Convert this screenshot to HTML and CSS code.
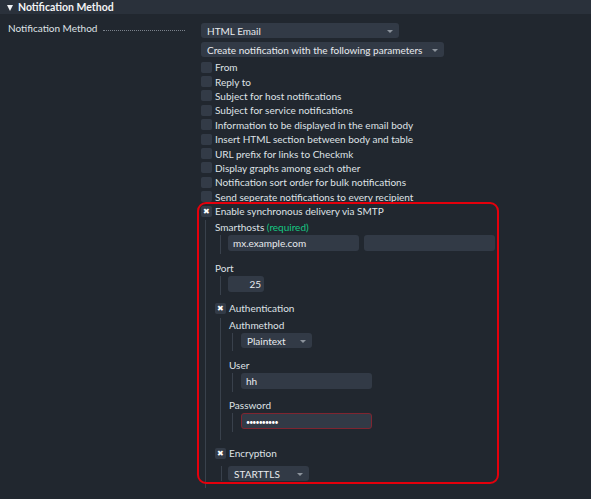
FILE: index.html
```html
<!DOCTYPE html>
<html>
<head>
<meta charset="utf-8">
<link rel="stylesheet" href="styles.css">
</head>
<body>
<div class="section-head"><span class="tri"></span><span class="head-title">Notification Method</span></div>
<div class="form-row">
  <div class="label"><span>Notification Method</span><span class="leader"></span></div>
  <div class="value">
    <div class="select w1"><span>HTML Email</span><span class="arrow"></span></div>
    <div class="select w2"><span>Create notification with the following parameters</span><span class="arrow"></span></div>
    <div class="checklist">
      <div class="cb-row"><span class="cb"></span><span>From</span></div>
      <div class="cb-row"><span class="cb"></span><span>Reply to</span></div>
      <div class="cb-row"><span class="cb"></span><span>Subject for host notifications</span></div>
      <div class="cb-row"><span class="cb"></span><span>Subject for service notifications</span></div>
      <div class="cb-row"><span class="cb"></span><span>Information to be displayed in the email body</span></div>
      <div class="cb-row"><span class="cb"></span><span>Insert HTML section between body and table</span></div>
      <div class="cb-row"><span class="cb"></span><span>URL prefix for links to Checkmk</span></div>
      <div class="cb-row"><span class="cb"></span><span>Display graphs among each other</span></div>
      <div class="cb-row"><span class="cb"></span><span>Notification sort order for bulk notifications</span></div>
      <div class="cb-row"><span class="cb"></span><span>Send seperate notifications to every recipient</span></div>
      <div class="cb-row"><span class="cb on">&#x2716;</span><span>Enable synchronous delivery via SMTP</span></div>
    </div>
    <div class="sub smtp">
      <div class="flabel first">Smarthosts <span class="req">(required)</span></div>
      <div class="indent hosts">
        <div class="input w-host">mx.example.com</div>
        <div class="input w-host"></div>
      </div>
      <div class="flabel port">Port</div>
      <div class="indent">
        <div class="input w-port">25</div>
      </div>
      <div class="cb-row auth"><span class="cb on">&#x2716;</span><span>Authentication</span></div>
      <div class="sub auth-sub">
        <div class="flabel first">Authmethod</div>
        <div class="indent deep">
          <div class="select w-plain"><span>Plaintext</span><span class="arrow"></span></div>
        </div>
        <div class="flabel user">User</div>
        <div class="indent deep">
          <div class="input w-user">hh</div>
        </div>
        <div class="flabel">Password</div>
        <div class="indent deep">
          <div class="input w-user invalid"><span class="dots">&#x2022;&#x2022;&#x2022;&#x2022;&#x2022;&#x2022;&#x2022;&#x2022;&#x2022;&#x2022;</span></div>
        </div>
      </div>
      <div class="cb-row enc"><span class="cb on">&#x2716;</span><span>Encryption</span></div>
      <div class="indent enc-ind">
        <div class="select w-tls"><span>STARTTLS</span><span class="arrow"></span></div>
      </div>
    </div>
  </div>
</div>
<div class="highlight"></div>
</body>
</html>
```
FILE: styles.css
```css
html, body {
  margin: 0;
  padding: 0;
}
body {
  background: #21272f;
  color: #dfe2e6;
  font-family: Lato, "Noto Sans", sans-serif;
  font-size: 10px;
  position: relative;
  height: 499px;
  overflow: hidden;
}
.section-head {
  height: 14px;
  background: #2a313b;
  display: flex;
  align-items: center;
  padding-left: 7px;
}
.tri {
  width: 0;
  height: 0;
  border-left: 3.5px solid transparent;
  border-right: 3.5px solid transparent;
  border-top: 6px solid #eef0f3;
  margin-right: 5px;
  margin-top: 1px;
}
.head-title {
  font-weight: bold;
  font-size: 10.5px;
  color: #f2f4f6;
}
.form-row {
  display: grid;
  grid-template-columns: 201px 1fr;
}
.label {
  display: flex;
  align-items: flex-end;
  padding: 7px 0 0 8px;
  height: 14px;
  line-height: 14px;
  align-self: start;
}
.leader {
  flex: 1;
  border-bottom: 1px dotted #7b828c;
  margin: 0 16px 4px 6px;
}
.value {
  padding-top: 9px;
}
.select {
  height: 15px;
  background: #323a46;
  border-radius: 3px;
  display: flex;
  align-items: center;
  justify-content: space-between;
  padding: 0 6px;
  box-sizing: border-box;
  color: #e8ebee;
}
.select + .select {
  margin-top: 4px;
}
.arrow {
  width: 0;
  height: 0;
  border-left: 3px solid transparent;
  border-right: 3px solid transparent;
  border-top: 3.5px solid #8c939c;
  margin-top: 2px;
}
.w1 { width: 198px; }
.w2 { width: 243px; }
.w-plain { width: 71px; }
.w-tls { width: 81px; }
.checklist {
  margin-top: 3px;
}
.cb-row {
  display: flex;
  align-items: center;
  height: 14.4px;
}
.cb {
  width: 11px;
  height: 11px;
  background: #333b47;
  border-radius: 2px;
  margin-right: 3px;
  flex: none;
  display: flex;
  align-items: center;
  justify-content: center;
  font-size: 8px;
  color: #ffffff;
  line-height: 1;
}
.sub {
  border-left: 1px solid #39414c;
}
.smtp {
  margin-left: 4px;
  padding-left: 9px;
  padding-bottom: 7px;
}
.flabel {
  height: 14px;
  line-height: 14px;
  margin-top: 6px;
}
.flabel.first {
  margin-top: 2px;
}
.flabel.port,
.flabel.user {
  margin-top: 7px;
}
.req {
  color: #15c783;
}
.indent {
  margin-left: 5px;
  border-left: 1px solid #39414c;
  padding-left: 7px;
  padding-bottom: 3px;
  margin-top: 1px;
}
.indent.deep {
  margin-left: 3px;
  padding-left: 8px;
}
.hosts {
  display: flex;
  gap: 5px;
}
.input {
  height: 16px;
  line-height: 16px;
  background: #323a46;
  border-radius: 3px;
  padding: 0 5px;
  box-sizing: border-box;
  color: #e8ebee;
}
.w-host { width: 131px; }
.w-port {
  width: 36px;
  text-align: right;
  padding-right: 3px;
}
.w-user { width: 131px; }
.invalid {
  border: 1px solid #7f2530;
  line-height: 14px;
  padding-left: 4px;
}
.dots {
  font-size: 7px;
  letter-spacing: -0.9px;
  color: #ffffff;
}
.auth {
  margin-top: 6px;
  height: 14px;
}
.auth-sub {
  margin-left: 5px;
  padding-left: 8px;
  padding-bottom: 8px;
  margin-top: 3px;
}
.enc {
  margin-top: 6px;
  height: 14px;
}
.enc-ind {
  margin-left: 6px;
  padding-left: 6px;
  margin-top: 6px;
  padding-bottom: 0;
}
.highlight {
  position: absolute;
  left: 197px;
  top: 202px;
  width: 302px;
  height: 282px;
  box-sizing: border-box;
  border: 2px solid #e5000c;
  border-radius: 9px;
  pointer-events: none;
}
```
